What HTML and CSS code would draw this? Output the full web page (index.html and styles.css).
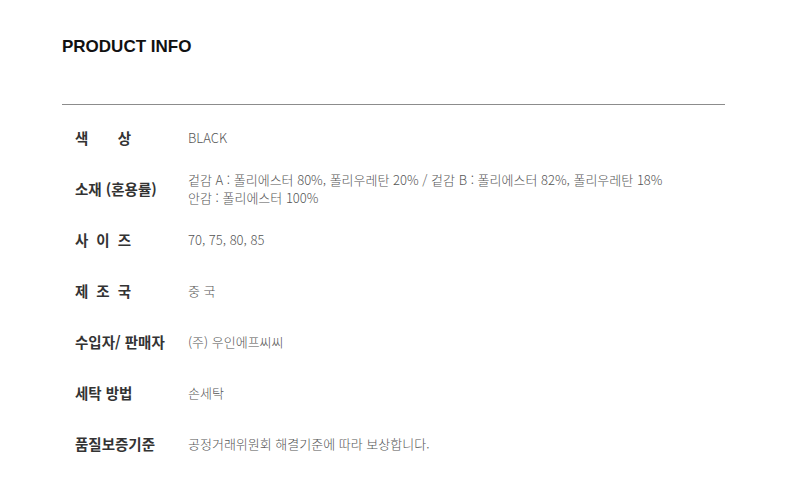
FILE: index.html
```html
<!doctype html>
<html lang="ko">
  <head>
    <meta charset="utf-8">
    <title>PRODUCT INFO</title>
    <link rel="stylesheet" href="styles.css">
  </head>
  <body>
    <div class="info">
      <h2 class="info_title">PRODUCT INFO</h2>
      <div class="info_table">
        <div class="row">
          <span class="label spread">색 상</span>
          <span class="value">BLACK</span>
        </div>
        <div class="row">
          <span class="label">소재 (혼용률)</span>
          <span class="value">겉감 A : 폴리에스터 80%, 폴리우레탄 20% / 겉감 B : 폴리에스터 82%, 폴리우레탄 18%<br>안감 : 폴리에스터 100%</span>
        </div>
        <div class="row">
          <span class="label spread">사 이 즈</span>
          <span class="value">70, 75, 80, 85</span>
        </div>
        <div class="row">
          <span class="label spread">제 조 국</span>
          <span class="value">중 국</span>
        </div>
        <div class="row">
          <span class="label">수입자/ 판매자</span>
          <span class="value">(주) 우인에프씨씨</span>
        </div>
        <div class="row">
          <span class="label">세탁 방법</span>
          <span class="value">손세탁</span>
        </div>
        <div class="row">
          <span class="label">품질보증기준</span>
          <span class="value">공정거래위원회 해결기준에 따라 보상합니다.</span>
        </div>
      </div>
    </div>
  </body>
</html>
```

FILE: styles.css
```css
body {
  margin: 0;
  background: #fff;
  font-family: "Noto Sans CJK KR", "Noto Sans", sans-serif;
  color: #333;
}

.info {
  width: 663px;
  padding: 34px 0 0 62px;
}

.info_title {
  margin: 0;
  font-family: "Liberation Sans", "Noto Sans CJK KR", sans-serif;
  font-size: 17px;
  font-weight: bold;
  color: #111;
  line-height: 26px;
}

.info_table {
  margin-top: 44px;
  border-top: 1px solid #8c8c8c;
  padding: 7px 0 0 13px;
}

.row {
  display: flex;
  align-items: center;
  height: 51px;
}

.label {
  width: 113px;
  flex: none;
  font-size: 14.5px;
  font-weight: bold;
  color: #333;
}

.spread {
  display: inline-block;
  width: 56px;
  margin-right: 57px;
  text-align: justify;
  text-align-last: justify;
}

.value {
  font-size: 13px;
  line-height: 18px;
  color: #555;
  font-weight: 300;
}
```
